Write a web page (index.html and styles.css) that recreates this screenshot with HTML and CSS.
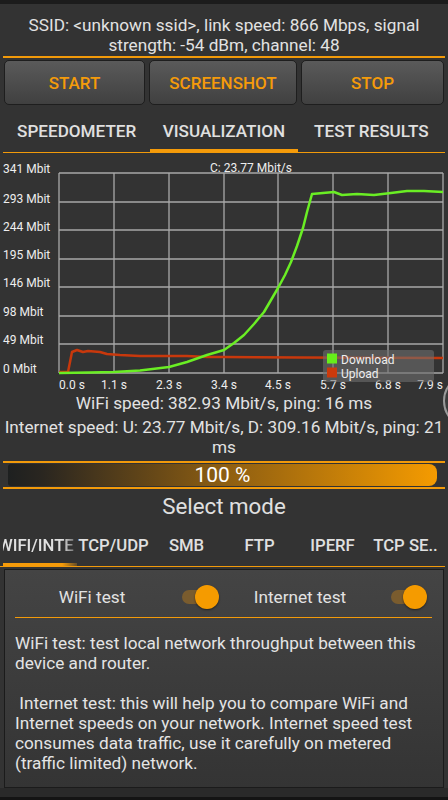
FILE: index.html
```html
<!DOCTYPE html>
<html>
<head>
<meta charset="utf-8">
<link rel="stylesheet" href="styles.css">
</head>
<body>
<div class="app">
  <div class="statusbar"></div>
  <div class="ssid">SSID: &lt;unknown ssid&gt;, link speed: 866 Mbps, signal<br>strength: -54 dBm, channel: 48</div>
  <div class="buttons">
    <button class="btn">START</button>
    <button class="btn">SCREENSHOT</button>
    <button class="btn">STOP</button>
  </div>
  <div class="tabs">
    <div class="tab">SPEEDOMETER</div>
    <div class="tab active">VISUALIZATION</div>
    <div class="tab">TEST RESULTS</div>
  </div>
  <svg class="chart" width="448" height="239" viewBox="0 153 448 239" xmlns="http://www.w3.org/2000/svg">
    <g class="grid">
      <line x1="59" y1="173" x2="59" y2="373"/>
      <line x1="114" y1="173" x2="114" y2="373"/>
      <line x1="169" y1="173" x2="169" y2="373"/>
      <line x1="224" y1="173" x2="224" y2="373"/>
      <line x1="278" y1="173" x2="278" y2="373"/>
      <line x1="333" y1="173" x2="333" y2="373"/>
      <line x1="388" y1="173" x2="388" y2="373"/>
      <line x1="443" y1="173" x2="443" y2="373"/>
      <line x1="59" y1="173" x2="443" y2="173"/>
      <line x1="59" y1="202" x2="443" y2="202"/>
      <line x1="59" y1="230" x2="443" y2="230"/>
      <line x1="59" y1="259" x2="443" y2="259"/>
      <line x1="59" y1="287" x2="443" y2="287"/>
      <line x1="59" y1="316" x2="443" y2="316"/>
      <line x1="59" y1="344" x2="443" y2="344"/>
      <line x1="59" y1="373" x2="443" y2="373"/>
    </g>
    <g class="ylab">
      <text x="3" y="172.5">341 Mbit</text>
      <text x="3" y="202.5">293 Mbit</text>
      <text x="3" y="230.5">244 Mbit</text>
      <text x="3" y="258.5">195 Mbit</text>
      <text x="3" y="286.5">146 Mbit</text>
      <text x="3" y="315.5">98 Mbit</text>
      <text x="3" y="343.5">49 Mbit</text>
      <text x="3" y="372.5">0 Mbit</text>
    </g>
    <text class="cap" x="251" y="171.5" text-anchor="middle">C: 23.77 Mbit/s</text>
    <g class="xlab">
      <text x="59" y="388.5">0.0 s</text>
      <text x="114" y="388.5" text-anchor="middle">1.1 s</text>
      <text x="169" y="388.5" text-anchor="middle">2.3 s</text>
      <text x="224" y="388.5" text-anchor="middle">3.4 s</text>
      <text x="278" y="388.5" text-anchor="middle">4.5 s</text>
      <text x="333" y="388.5" text-anchor="middle">5.7 s</text>
      <text x="388" y="388.5" text-anchor="middle">6.8 s</text>
      <text x="443" y="388.5" text-anchor="end">7.9 s</text>
    </g>
    <polyline class="up" points="59,372 68,372 72,352 77,350 83,352 88,351 100,352 107,354 120,355 140,356 167,356 187,356 207,357 224,357 300,357.5 443,358"/>
    <polyline class="down" points="59,373 90,372.5 114,372 140,370.5 169,367 187,362 207,355 224,350 234,343 244,335 254,324 264,312 271,300 278,288 285,275 291,262 297,246 303,228 307,212 312,194 334,192 342,195 357,194 374,195 391,193 407,191 424,191 443,192"/>
    <rect class="legend" x="323" y="350" width="111" height="32" rx="3"/>
    <rect x="327" y="353.5" width="10" height="10" fill="#66ee1a"/>
    <rect x="327" y="367.5" width="10" height="10" fill="#cc3a0c"/>
    <text class="leg" x="341" y="363.5">Download</text>
    <text class="leg" x="341" y="377.5">Upload</text>
  </svg>
  <div class="speeds">
    <p class="wifi">WiFi speed: 382.93 Mbit/s, ping: 16 ms</p>
    <p class="inet">Internet speed: U: 23.77 Mbit/s, D: 309.16 Mbit/s, ping: 21<br>ms</p>
  </div>
  <div class="progress">
    <div class="bar">100 %</div>
  </div>
  <div class="select">Select mode</div>
  <div class="modes">
    <div class="mode first active"><span>WIFI/INTERNET</span></div>
    <div class="mode">TCP/UDP</div>
    <div class="mode">SMB</div>
    <div class="mode">FTP</div>
    <div class="mode">IPERF</div>
    <div class="mode">TCP SE..</div>
  </div>
  <div class="panel">
    <div class="toggles">
      <span class="label">WiFi test</span>
      <span class="switch"><span class="track"></span><span class="thumb"></span></span>
      <span class="label">Internet test</span>
      <span class="switch"><span class="track"></span><span class="thumb"></span></span>
    </div>
    <div class="desc">
      <p>WiFi test: test local network throughput between this<br>device and router.</p>
      <p>&nbsp;Internet test: this will help you to compare WiFi and<br>Internet speeds on your network. Internet speed test<br>consumes data traffic, use it carefully on metered<br>(traffic limited) network.</p>
    </div>
  </div>
  <div class="footer"></div>
  <div class="fab"></div>
</div>
</body>
</html>
```

FILE: styles.css
```css
html, body {
  margin: 0;
  padding: 0;
}
body {
  background: #333333;
  font-family: Roboto, "Noto Sans", sans-serif;
  color: #e2e2e2;
}
.app {
  position: relative;
  width: 448px;
  height: 800px;
  overflow: hidden;
  display: flex;
  flex-direction: column;
}
.statusbar {
  height: 4px;
  background: #1c1c1c;
  flex: none;
}
.ssid {
  margin: 0 3px;
  padding: 11px 0 1px;
  font-size: 17.2px;
  line-height: 20px;
  text-align: center;
  white-space: nowrap;
  border-bottom: 2px solid #f29a0a;
}
.buttons {
  display: grid;
  grid-template-columns: 141px 148px 143px;
  gap: 4px;
  padding: 2px 4px 0;
}
.btn {
  height: 45px;
  background: linear-gradient(#5a5a5a, #404040);
  border: 1px solid #1e1e1e;
  border-radius: 5px;
  color: #f59b0a;
  font-family: Roboto, sans-serif;
  font-weight: 500;
  font-size: 17px;
  padding: 0;
}
.tabs {
  display: grid;
  grid-template-columns: repeat(3, 1fr);
  margin: 0 3px;
  border-bottom: 1px solid #f29a0a;
}
.tab {
  height: 47px;
  box-sizing: border-box;
  padding-top: 5px;
  display: flex;
  align-items: center;
  justify-content: center;
  font-size: 17.1px;
  font-weight: 500;
  color: #e0e0e0;
  white-space: nowrap;
}
.tab.active {
  box-shadow: inset 0 -3px 0 #f59b0a;
}
.chart {
  display: block;
  flex: none;
}
.grid line {
  stroke: #a9a9a9;
  stroke-width: 1.3;
}
.ylab text, .xlab text, .cap, .leg {
  font-family: Roboto, sans-serif;
  font-size: 12px;
  fill: #eeeeee;
}
.down {
  fill: none;
  stroke: #6aee24;
  stroke-width: 2.5;
  stroke-linejoin: round;
}
.up {
  fill: none;
  stroke: #c8380c;
  stroke-width: 2.5;
  stroke-linejoin: round;
}
.legend {
  fill: rgba(110, 110, 110, 0.6);
}
.speeds {
  text-align: center;
  font-size: 17.2px;
  line-height: 20px;
  white-space: nowrap;
}
.speeds p {
  margin: 0;
}
.wifi {
  padding-top: 1px;
}
.speeds .inet {
  margin-top: 4px;
}
.progress {
  margin: 4px 3px 0;
  padding: 1px 8px 1px 5px;
  border-top: 2px solid #f29a0a;
  border-bottom: 2px solid #f29a0a;
}
.bar {
  height: 22px;
  line-height: 23px;
  border-radius: 3px 8px 8px 3px;
  background: linear-gradient(to right, #1e2020 0%, #2a2620 8%, #8c5d12 50%, #f59b00 100%);
  text-align: center;
  font-size: 21px;
  color: #ffffff;
}
.select {
  height: 30px;
  box-sizing: border-box;
  padding-top: 3px;
  line-height: 28px;
  text-align: center;
  font-size: 22.3px;
  color: #e0e0e0;
}
.modes {
  display: flex;
  margin-right: 3px;
  border-bottom: 1px solid #f29a0a;
}
.mode {
  flex: none;
  width: 73px;
  height: 47px;
  box-sizing: border-box;
  padding-top: 6px;
  display: flex;
  align-items: center;
  justify-content: center;
  font-size: 16.7px;
  font-weight: 500;
  color: #e0e0e0;
  white-space: nowrap;
}
.mode.first {
  width: 74px;
  margin-left: 3px;
  justify-content: flex-start;
  overflow: hidden;
  padding-top: 9px;
  border-bottom: 3px solid #f59b0a;
  -webkit-mask-image: linear-gradient(to right, #000 80%, rgba(0,0,0,0.25) 100%);
  mask-image: linear-gradient(to right, #000 80%, rgba(0,0,0,0.25) 100%);
}
.mode.first span {
  display: block;
  flex: none;
  width: 76px;
  margin-left: -5px;
  overflow: hidden;
}
.panel {
  margin: 2px 4px 0;
  height: 219px;
  box-sizing: border-box;
  border: 1px solid #1b1b1b;
  background: linear-gradient(#444444, #343434);
  flex: none;
}
.toggles {
  display: grid;
  grid-template-columns: 154px 53px 156px 52px;
  align-items: center;
  height: 48px;
  box-sizing: border-box;
  padding-top: 6px;
  margin: 0 11px 0 10px;
  border-bottom: 1px solid #f29a0a;
}
.label {
  text-align: center;
  font-size: 17.2px;
  color: #e2e2e2;
}
.switch {
  position: relative;
  height: 26px;
}
.track {
  position: absolute;
  left: 13px;
  top: 6px;
  width: 34px;
  height: 14px;
  border-radius: 7px;
  background: #7a5c2e;
}
.thumb {
  position: absolute;
  right: 3px;
  top: 1px;
  width: 24px;
  height: 24px;
  border-radius: 50%;
  background: #f59b00;
  box-shadow: 0 1px 2px rgba(0,0,0,0.5);
}
.desc {
  padding: 15px 0 0 10px;
  font-size: 17.2px;
  line-height: 20px;
  color: #e4e4e4;
  white-space: nowrap;
}
.desc p {
  margin: 0 0 20px;
}
.footer {
  flex: 1;
  background: #2a2a2a;
  border-bottom: 3px solid #141414;
}
.fab {
  position: absolute;
  left: 443px;
  top: 373px;
  width: 52px;
  height: 52px;
  border-radius: 50%;
  border: 2px solid #9a9a9a;
  background: #3c3c3c;
}
```
